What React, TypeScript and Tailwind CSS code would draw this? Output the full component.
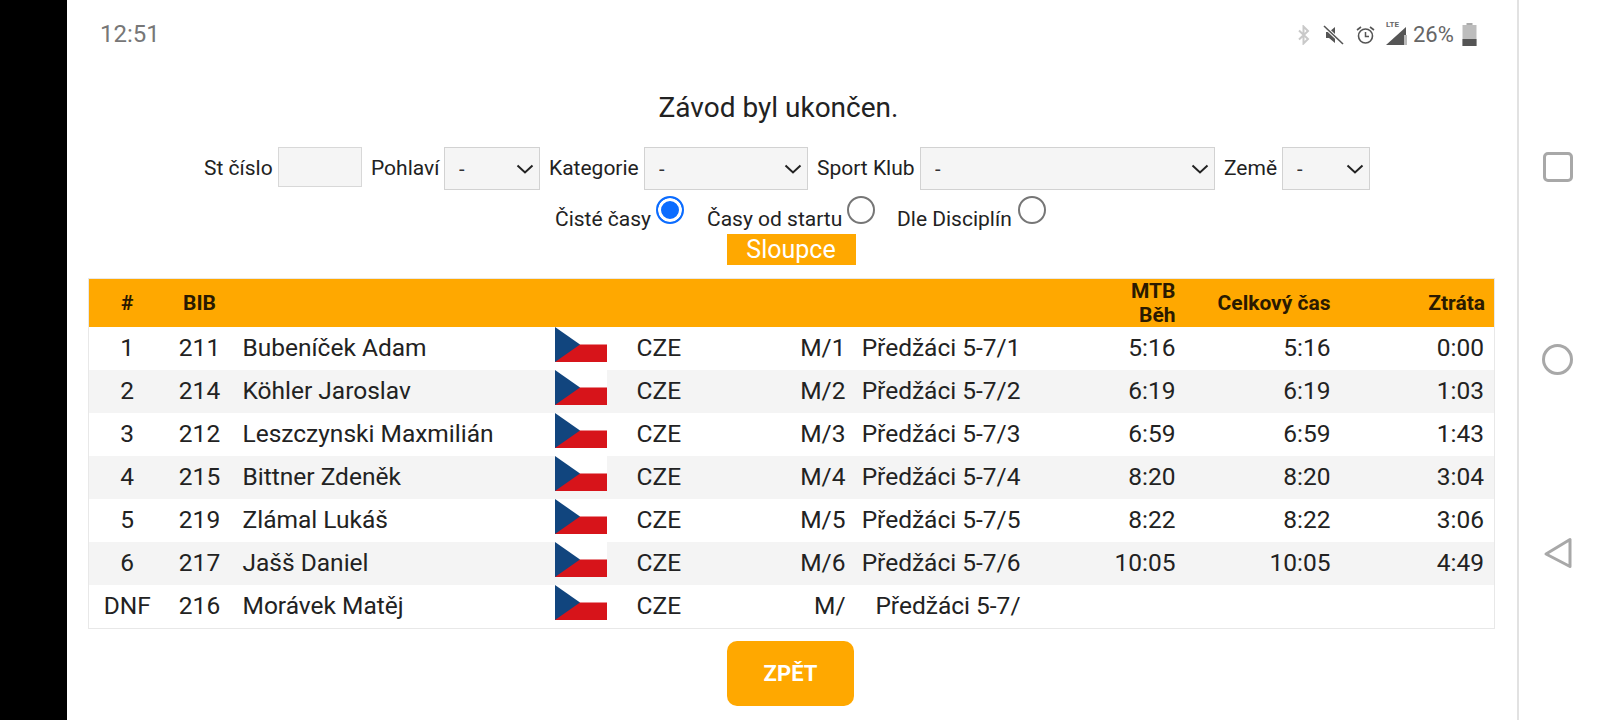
const rows = [
  { pos: "1", bib: "211", name: "Bubeníček Adam", gender: "M/1", cat: "Předžáci 5-7/1", mtb: "5:16", total: "5:16", lost: "0:00" },
  { pos: "2", bib: "214", name: "Köhler Jaroslav", gender: "M/2", cat: "Předžáci 5-7/2", mtb: "6:19", total: "6:19", lost: "1:03" },
  { pos: "3", bib: "212", name: "Leszczynski Maxmilián", gender: "M/3", cat: "Předžáci 5-7/3", mtb: "6:59", total: "6:59", lost: "1:43" },
  { pos: "4", bib: "215", name: "Bittner Zdeněk", gender: "M/4", cat: "Předžáci 5-7/4", mtb: "8:20", total: "8:20", lost: "3:04" },
  { pos: "5", bib: "219", name: "Zlámal Lukáš", gender: "M/5", cat: "Předžáci 5-7/5", mtb: "8:22", total: "8:22", lost: "3:06" },
  { pos: "6", bib: "217", name: "Jašš Daniel", gender: "M/6", cat: "Předžáci 5-7/6", mtb: "10:05", total: "10:05", lost: "4:49" },
  { pos: "DNF", bib: "216", name: "Morávek Matěj", gender: "M/", cat: "Předžáci 5-7/", mtb: "", total: "", lost: "" },
];

function CzechFlag() {
  return (
    <svg width="52" height="35" viewBox="0 0 52 35" className="block">
      <rect width="52" height="17.5" fill="#ffffff" />
      <rect y="17.5" width="52" height="17.5" fill="#d7141a" />
      <path d="M0 0L25 17.5L0 35Z" fill="#11457e" />
    </svg>
  );
}

function Dropdown({ className }: { className: string }) {
  return (
    <div className={`relative h-[43px] ${className}`}>
      <select className="h-full w-full appearance-none border border-[#d2d2d2] bg-[#f5f5f5] pl-[14px] text-[20px] text-[#333] outline-none">
        <option>-</option>
      </select>
      <svg width="18" height="10" viewBox="0 0 18 10" className="pointer-events-none absolute right-[6px] top-[17px]">
        <path d="M1.5 1.5L9 8.5L16.5 1.5" fill="none" stroke="#222" strokeWidth="2" />
      </svg>
    </div>
  );
}

function StatusIcons() {
  return (
    <div className="flex items-center text-[#666]">
      <svg width="14" height="20" viewBox="0 0 14 20" className="ml-[1297px]">
        <path d="M2 5.5L11 14L6.5 18.5V1.5L11 6L2 14.5" fill="none" stroke="#c9c9c9" strokeWidth="2" />
      </svg>
      <svg width="21" height="20" viewBox="0 0 21 20" className="ml-[12px]">
        <path d="M6 7L12 2V18L6 13H3V7Z" fill="#555" />
        <path d="M1 1L20 19" stroke="#fff" strokeWidth="3.5" />
        <path d="M1 1L20 19" stroke="#555" strokeWidth="1.6" />
      </svg>
      <svg width="19" height="20" viewBox="0 0 19 20" className="ml-[12px]">
        <circle cx="9.5" cy="11" r="7" fill="none" stroke="#555" strokeWidth="1.6" />
        <path d="M9.5 7V11.5H13" fill="none" stroke="#555" strokeWidth="1.5" />
        <path d="M1 5L5 2M18 5L14 2" stroke="#555" strokeWidth="1.6" />
      </svg>
      <div className="relative ml-[11px] h-[22px] w-[22px]">
        <svg width="22" height="22" viewBox="0 0 22 22" className="block">
          <path d="M0 21L20 3V21Z" fill="#555" />
          <path d="M18 11H21V21H18Z" fill="#bbb" />
        </svg>
        <span className="absolute left-0 top-[-4px] text-[8px] font-bold leading-[9px]">LTE</span>
      </div>
      <span className="ml-[5px] text-[22px] leading-none text-[#666]">26%</span>
      <svg width="15" height="23" viewBox="0 0 15 23" className="ml-[8px]">
        <rect x="4.5" y="0" width="6" height="3" fill="#aaa" />
        <rect x="0.5" y="2" width="14" height="21" fill="#bdbdbd" />
        <rect x="0.5" y="16" width="14" height="7" fill="#555" />
      </svg>
    </div>
  );
}

const radioClass =
  "m-0 h-[28px] w-[28px] appearance-none rounded-full border-2 border-[#767676] bg-white checked:border-[#0b6cff] checked:bg-[#0b6cff] checked:shadow-[inset_0_0_0_3px_#ffffff]";

export default function App() {
  return (
    <div className="flex h-[720px] w-[1600px] overflow-hidden bg-white text-[#222] [font-family:Roboto,sans-serif]">
      <div className="w-[67px] shrink-0 bg-black" />

      <main className="flex w-[1450px] shrink-0 flex-col">
        <div className="relative flex h-[68px] shrink-0 items-center pl-[33px] text-[24px] text-[#777]">
          <span>12:51</span>
          <div className="absolute left-[-67px] top-[23px]">
            <StatusIcons />
          </div>
        </div>

        <h1 className="flex h-[79px] shrink-0 items-center justify-center pr-[27px] text-[28px] font-normal text-[#222]">
          Závod byl ukončen.
        </h1>

        <div className="flex h-[43px] shrink-0 gap-[9px] pl-[137px] text-[21px]">
          <label className="flex w-[65px] items-center whitespace-nowrap">St číslo</label>
          <input className="h-[40px] w-[84px] border border-[#d8d8d8] bg-[#f5f5f5]" />
          <label className="flex w-[64px] items-center whitespace-nowrap">Pohlaví</label>
          <Dropdown className="w-[96px]" />
          <label className="flex w-[86px] items-center whitespace-nowrap">Kategorie</label>
          <Dropdown className="w-[164px]" />
          <label className="flex w-[94px] items-center whitespace-nowrap">Sport Klub</label>
          <Dropdown className="w-[295px]" />
          <label className="flex w-[49px] items-center whitespace-nowrap">Země</label>
          <Dropdown className="w-[88px]" />
        </div>

        <div className="mt-[6px] flex h-[38px] shrink-0 items-start pl-[488px] text-[21px]">
          <span className="mt-[8px] w-[101px] whitespace-nowrap">Čisté časy</span>
          <input type="radio" name="mode" defaultChecked className={radioClass} />
          <span className="ml-[23px] mt-[8px] w-[140px] whitespace-nowrap">Časy od startu</span>
          <input type="radio" name="mode" className={radioClass} />
          <span className="ml-[22px] mt-[8px] w-[121px] whitespace-nowrap">Dle Disciplín</span>
          <input type="radio" name="mode" className={radioClass} />
        </div>

        <div className="flex shrink-0 justify-center pr-[2px]">
          <button className="h-[31px] w-[129px] bg-[#ffa800] text-[25px] leading-none text-[#fff]">Sloupce</button>
        </div>

        <table className="ml-[21px] mt-[13px] w-[1406px] shrink-0 table-fixed border-collapse border border-[#e8e8e8] text-[24.5px]">
          <colgroup>
            <col className="w-[77px]" />
            <col className="w-[66px]" />
            <col className="w-[313px]" />
            <col className="w-[82px]" />
            <col className="w-[133px]" />
            <col className="w-[96px]" />
            <col className="w-[175px]" />
            <col className="w-[155px]" />
            <col className="w-[155px]" />
            <col className="w-[154px]" />
          </colgroup>
          <thead>
            <tr className="h-[47px] bg-[#ffa800] text-[21px] font-bold leading-[24px] text-[#2a1a00]">
              <th className="text-center">#</th>
              <th className="pl-[2px] text-center">BIB</th>
              <th />
              <th />
              <th />
              <th />
              <th />
              <th className="pr-[10px] text-right">
                MTB
                <br />
                Běh
              </th>
              <th className="whitespace-nowrap pr-[10px] text-right">Celkový čas</th>
              <th className="pr-[9px] text-right">Ztráta</th>
            </tr>
          </thead>
          <tbody>
            {rows.map((row, i) => (
              <tr key={row.bib} className={i % 2 === 1 ? "h-[43px] bg-[#f4f4f4]" : "h-[43px] bg-white"}>
                <td className="text-center">{row.pos}</td>
                <td className="pl-[2px] text-center">{row.bib}</td>
                <td className="whitespace-nowrap pl-[11px]">{row.name}</td>
                <td className="pl-[10px] align-top">
                  <CzechFlag />
                </td>
                <td className="pl-[10px]">CZE</td>
                <td className="pr-[10px] text-right">{row.gender}</td>
                <td className="whitespace-nowrap pr-[10px] text-right">{row.cat}</td>
                <td className="pr-[10px] text-right">{row.mtb}</td>
                <td className="pr-[10px] text-right">{row.total}</td>
                <td className="pr-[10px] text-right">{row.lost}</td>
              </tr>
            ))}
          </tbody>
        </table>

        <div className="mt-[12px] flex shrink-0 justify-center pr-[3px]">
          <button className="h-[65px] w-[127px] rounded-[10px] bg-[#ffa800] text-[22px] font-bold text-white">ZPĚT</button>
        </div>
      </main>

      <aside className="flex flex-1 flex-col items-center justify-center gap-[162px] border-l-2 border-[#e2e2e2] pr-[4px]">
        <div className="h-[30px] w-[30px] rounded-[5px] border-[3px] border-[#a8a8a8]" />
        <div className="h-[31px] w-[31px] rounded-full border-[3px] border-[#a8a8a8]" />
        <svg width="30" height="32" viewBox="0 0 30 32" className="block">
          <path d="M27 2.5V29.5L3 17Z" fill="none" stroke="#a8a8a8" strokeWidth="3" strokeLinejoin="round" />
        </svg>
      </aside>
    </div>
  );
}
